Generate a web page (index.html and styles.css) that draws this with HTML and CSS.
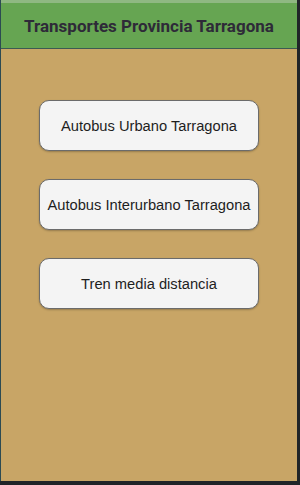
FILE: index.html
```html
<!DOCTYPE html>
<html lang="es">
<head>
  <meta charset="UTF-8">
  <meta name="viewport" content="width=device-width, initial-scale=1.0">
  <title>Transportes Provincia Tarragona</title>
  <link rel="stylesheet" href="styles.css">
</head>
<body>
  <div class="screen">
    <div class="header">
      <h1>Transportes Provincia Tarragona</h1>
    </div>
    <div class="menu">
      <button class="option">Autobus Urbano Tarragona</button>
      <button class="option">Autobus Interurbano Tarragona</button>
      <button class="option">Tren media distancia</button>
    </div>
  </div>
</body>
</html>
```

FILE: styles.css
```css
html,
body {
  margin: 0;
  height: 100%;
  background: #202428;
}

.screen {
  box-sizing: border-box;
  width: 297px;
  height: 481px;
  border-left: 1px solid #2c4a52;
  background: #c8a566;
  display: flex;
  flex-direction: column;
}

.header {
  box-sizing: border-box;
  height: 49px;
  background: #66a552;
  border-top: 3px solid #8fb882;
  border-bottom: 1px solid #3d5a52;
  display: flex;
  align-items: center;
  justify-content: center;
}

.header h1 {
  margin: 0;
  font-family: Roboto, "Liberation Sans", sans-serif;
  font-size: 17px;
  font-weight: bold;
  color: #2e2a38;
}

.menu {
  display: flex;
  flex-direction: column;
  align-items: center;
  padding-top: 51px;
}

.option {
  box-sizing: border-box;
  width: 220px;
  height: 51px;
  margin-bottom: 28px;
  border: 1.5px solid #6b6b6b;
  border-radius: 10px;
  background: #f4f4f4;
  box-shadow: 0 1px 2px rgba(0, 0, 0, 0.25);
  font-family: "Liberation Sans", Arial, sans-serif;
  font-size: 14.7px;
  color: #1e1e1e;
  cursor: pointer;
}
```
